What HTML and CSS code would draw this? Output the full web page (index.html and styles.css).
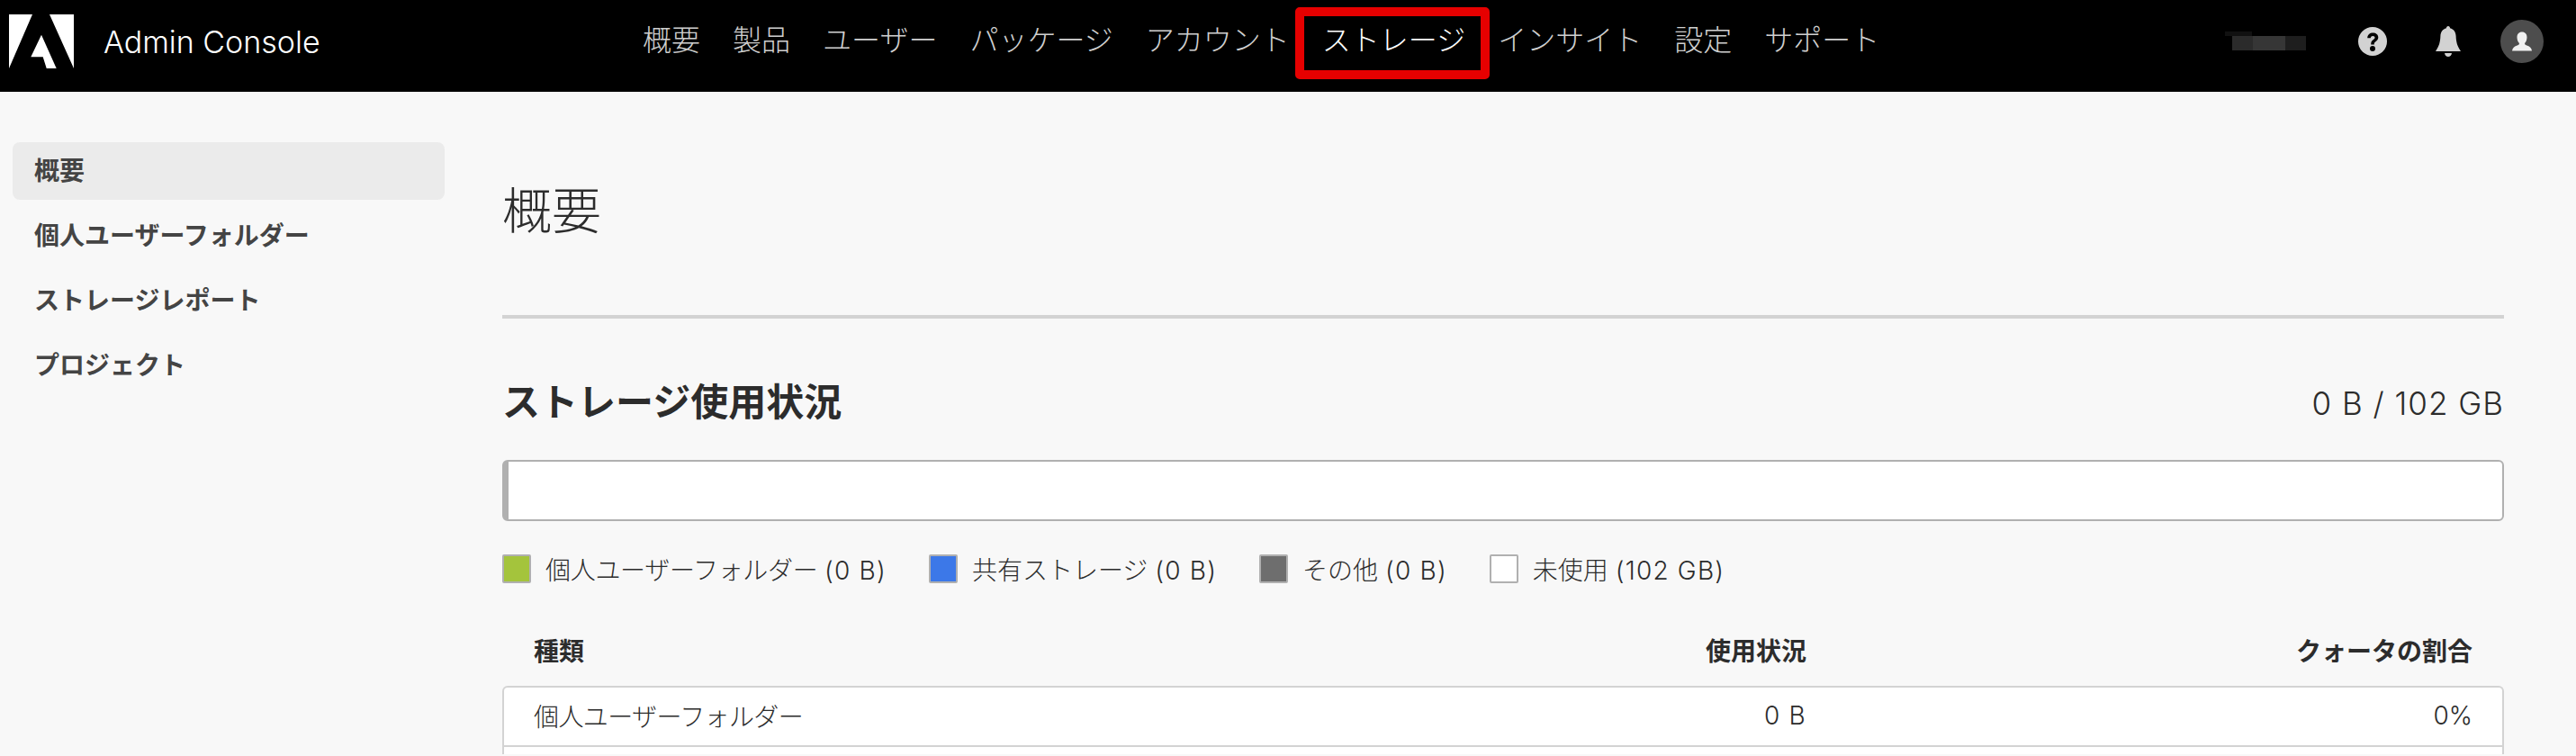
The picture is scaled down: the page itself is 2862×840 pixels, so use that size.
FILE: index.html
```html
<!DOCTYPE html>
<html lang="ja">
<head>
<meta charset="utf-8">
<title>Admin Console</title>
<link rel="stylesheet" href="styles.css">
</head>
<body>
<header class="topbar">
  <div class="brand">
    <svg class="logo" viewBox="0 0 72 60" aria-hidden="true"><path d="M0 0H26L0 60Z M45 0H72V60Z M36 22.700L52.700 60H41.700L37.700 47.300H24.300Z"/></svg>
    <span class="product">Admin Console</span>
  </div>
  <nav class="nav">
    <a class="nav-item">概要</a>
    <a class="nav-item">製品</a>
    <a class="nav-item">ユーザー</a>
    <a class="nav-item">パッケージ</a>
    <a class="nav-item">アカウント</a>
    <a class="nav-item nav-item-active">ストレージ</a>
    <a class="nav-item">インサイト</a>
    <a class="nav-item">設定</a>
    <a class="nav-item">サポート</a>
  </nav>
  <div class="tools">
    <div class="redacted"><i class="r1"></i><i class="r2"></i><i class="r3"></i><i class="r4"></i></div>
    <svg class="icon-help" viewBox="0 0 32 32" aria-hidden="true"><circle cx="16" cy="16" r="16" fill="#d2d2d2"/><path d="M10.2 12.2C10.4 8.6 13 6.6 16.3 6.6C19.8 6.6 22.3 8.6 22.3 11.6C22.3 14 21 15.2 19.4 16.3C18 17.3 17.8 17.8 17.8 19.4H14.2C14.2 16.8 14.8 15.6 16.6 14.3C17.9 13.4 18.5 12.8 18.5 11.8C18.5 10.6 17.6 9.9 16.3 9.9C14.9 9.9 14 10.8 13.9 12.2Z" fill="#000"/><circle cx="16" cy="24" r="3" fill="#000"/></svg>
    <svg class="icon-bell" viewBox="0 0 28 34" aria-hidden="true"><path fill="#d2d2d2" d="M14 0C15.3 0 16 1 16 2.2C20 3.2 22.4 6.4 22.6 11C22.9 18 24 22 28 28H0C4 22 5.100 18 5.400 11C5.600 6.400 8 3.200 12 2.200C12 1 12.700 0 14 0Z M10 30H18C17.700 32.500 16 34 14 34C12 34 10.300 32.500 10 30Z"/></svg>
    <div class="avatar"><svg viewBox="0 0 24 24" aria-hidden="true"><path fill="#f0f0f0" d="M12 1.500C15.500 1.500 17.500 4 17.500 7.500C17.500 10.500 16.300 12.800 15 14C15 15.500 16 16 18 16.800C20.500 17.800 22.500 19 23 22.500H1C1.500 19 3.500 17.800 6 16.800C8 16 9 15.500 9 14C7.700 12.800 6.500 10.500 6.500 7.500C6.500 4 8.500 1.500 12 1.500Z"/></svg></div>
  </div>
</header>
<div class="layout">
  <aside class="sidebar">
    <a class="side-item side-item-active">概要</a>
    <a class="side-item">個人ユーザーフォルダー</a>
    <a class="side-item">ストレージレポート</a>
    <a class="side-item">プロジェクト</a>
  </aside>
  <main class="content">
    <h1 class="page-title">概要</h1>
    <div class="section-head">
      <h2 class="section-title">ストレージ使用状況</h2>
      <span class="quota">0 B / 102 GB</span>
    </div>
    <div class="bar"></div>
    <ul class="legend">
      <li class="legend-item"><span class="swatch swatch-green"></span><span>個人ユーザーフォルダー <span class="num">(0 B)</span></span></li>
      <li class="legend-item"><span class="swatch swatch-blue"></span><span>共有ストレージ <span class="num">(0 B)</span></span></li>
      <li class="legend-item"><span class="swatch swatch-grey"></span><span>その他 <span class="num">(0 B)</span></span></li>
      <li class="legend-item"><span class="swatch swatch-white"></span><span>未使用 <span class="num">(102 GB)</span></span></li>
    </ul>
    <div class="row row-head">
      <span class="cell-type">種類</span>
      <span class="cell-usage">使用状況</span>
      <span class="cell-share">クォータの割合</span>
    </div>
    <div class="table">
      <div class="row row-body">
        <span class="cell-type">個人ユーザーフォルダー</span>
        <span class="cell-usage num">0 B</span>
        <span class="cell-share">0%</span>
      </div>
    </div>
  </main>
</div>
</body>
</html>
```
FILE: styles.css
```css
* { box-sizing: border-box; }
html, body { margin: 0; height: 840px; overflow: hidden; }
body {
  background: #f8f8f8;
  color: #2c2c2c;
  font-family: "Inter", "Noto Sans CJK JP", sans-serif;
  font-weight: 300;
}
.topbar {
  height: 102px;
  background: #000;
  display: flex;
  align-items: center;
}
.brand {
  width: 714px;
  flex: none;
  display: flex;
  align-items: center;
  padding-left: 10px;
}
.logo { width: 72px; height: 60px; fill: #fff; margin-top: -10px; flex: none; }
.product {
  margin-left: 33px;
  margin-top: -10px;
  color: #fff;
  font-size: 34px;
}
.nav {
  display: flex;
  gap: 36px;
  align-self: stretch;
  font-size: 32px;
  color: #cfcfcf;
}
.nav-item {
  position: relative;
  display: flex;
  align-items: center;
  padding-bottom: 18px;
  white-space: nowrap;
}
.nav-item-active { color: #fff; }
.nav-item-active::after {
  content: "";
  position: absolute;
  left: -30px;
  right: -27px;
  top: 8px;
  height: 60px;
  border: 10px solid #e60000;
  border-radius: 5px;
}
.tools {
  margin-left: auto;
  display: flex;
  align-items: center;
  padding-right: 36px;
  margin-top: -10px;
}
.redacted { position: relative; width: 90px; height: 24px; margin-right: 58px; }
.redacted i { position: absolute; display: block; }
.r1 { left: 8px; top: 6px; width: 23px; height: 16px; background: #2b2b2b; }
.r2 { left: 31px; top: 6px; width: 46px; height: 16px; background: #363636; }
.r3 { left: 67px; top: 6px; width: 23px; height: 16px; background: #1e1e1e; }
.r4 { left: 0; top: 1px; width: 30px; height: 5px; background: #111; }
.icon-help { width: 32px; height: 32px; flex: none; }
.icon-bell { width: 28px; height: 34px; margin-left: 54px; flex: none; }
.avatar {
  width: 48px;
  height: 48px;
  margin-left: 44px;
  border-radius: 50%;
  background: #4d4d4d;
  display: flex;
  align-items: center;
  justify-content: center;
  flex: none;
}
.avatar svg { width: 24px; height: 24px; }
.layout { display: flex; }
.sidebar {
  width: 494px;
  flex: none;
  padding: 56px 0 0 14px;
  display: flex;
  flex-direction: column;
  gap: 8px;
}
.side-item {
  height: 64px;
  padding: 0 0 5px 24px;
  display: flex;
  align-items: center;
  font-size: 28px;
  font-weight: 700;
  color: #444;
  border-radius: 8px;
  white-space: nowrap;
}
.side-item-active { background: #ebebeb; }
.content { flex: 1; margin: 0 80px 0 64px; min-width: 0; }
.page-title {
  margin: 0;
  height: 252px;
  padding: 99px 0 0 0;
  border-bottom: 4px solid #d3d3d3;
  font-size: 55px;
  line-height: 66px;
  font-weight: 300;
  color: #2c2c2c;
}
.section-head {
  display: flex;
  justify-content: space-between;
  align-items: center;
  margin-top: 64px;
  height: 58px;
  margin-bottom: 35px;
}
.section-title { margin: 0; font-size: 42px; font-weight: 700; line-height: 58px; color: #2c2c2c; }
.quota { font-size: 35px; letter-spacing: 1px; margin-top: 2px; }
.bar {
  height: 68px;
  background: #fff;
  border: 2px solid #b0b0b0;
  border-left-width: 7px;
  border-radius: 6px;
}
.legend {
  list-style: none;
  margin: 37px 0 0;
  padding: 0;
  display: flex;
  gap: 47px;
  font-size: 28px;
  height: 32px;
}
.legend-item { display: flex; align-items: center; gap: 16px; white-space: nowrap; }
.legend-item:first-child { letter-spacing: -0.3px; }
.num { letter-spacing: 1.2px; }
.swatch { width: 32px; height: 32px; border: 2px solid #b0b0b0; border-radius: 2px; flex: none; }
.swatch-green { background: #a4c43c; }
.swatch-blue { background: #3c78e8; }
.swatch-grey { background: #6e6e6e; }
.swatch-white { background: #fff; }
.row {
  display: grid;
  grid-template-columns: 1fr 400px 740px;
  align-items: center;
  padding: 0 35px 4px;
  font-size: 28px;
}
.row-head { margin-top: 38px; height: 76px; font-weight: 700; }
.cell-usage, .cell-share { text-align: right; }
.table {
  height: 76px;
  background: #fff;
  border: 2px solid #d3d3d3;
  border-bottom: 0;
  border-radius: 6px 6px 0 0;
}
.table .row { padding: 0 33px 2px; border-bottom: 2px solid #d3d3d3; height: 66px; }
.row-body .cell-type { letter-spacing: -0.6px; }
```
